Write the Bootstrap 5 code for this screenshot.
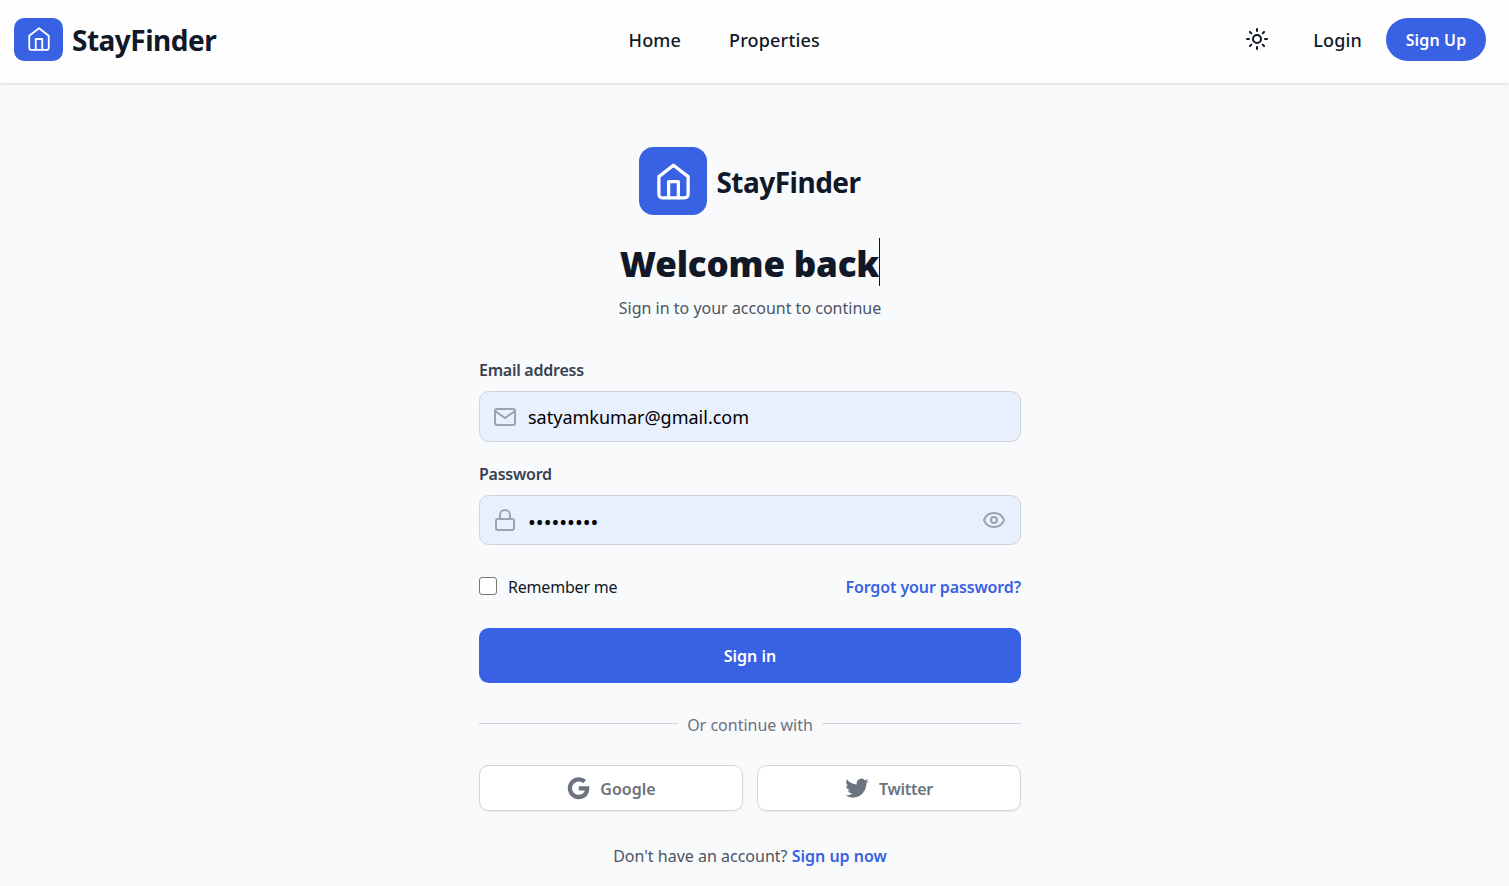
<!DOCTYPE html>
<html lang="en">
<head>
<meta charset="utf-8">
<meta name="viewport" content="width=device-width, initial-scale=1">
<title>StayFinder – Sign in</title>
<link href="https://cdn.jsdelivr.net/npm/bootstrap@5.3.0/dist/css/bootstrap.min.css" rel="stylesheet">
<script src="https://cdn.jsdelivr.net/npm/bootstrap@5.3.0/dist/js/bootstrap.bundle.min.js" defer></script>
<style>
:root{--brand:#3861e3;--ink:#111827}
body{font-family:"Noto Sans",sans-serif;font-size:16px;line-height:24px;color:var(--ink);background:#f9fafc}
svg{flex:none;display:block}
.stroke-icon{fill:none;stroke:currentColor;stroke-width:2;stroke-linecap:round;stroke-linejoin:round}
.stroke-thin{stroke-width:1.7}
.site-header{height:83px;padding:0 23px 4px 14px;background:#fefefe;box-shadow:0 1px 3px rgba(0,0,0,.1),0 1px 2px rgba(0,0,0,.04)}
.brand-name{font-size:28px;font-weight:700;letter-spacing:-.5px;line-height:36px;color:var(--ink);margin-left:9px}
.logo-tile{background:var(--brand);color:#fff}
.logo-sm{width:49px;height:43px;border-radius:10px;padding-bottom:1px}
.logo-lg{width:68px;height:68px;border-radius:14.5px}
.top-nav{gap:48px}
.top-link{font-size:18px;font-weight:500;color:var(--ink);text-decoration:none;letter-spacing:.17px}
.theme-btn{width:50px;height:44px;color:var(--ink);padding:0 0 2px}
.login-link{margin:0 24px 0 31px}
.signup-pill{width:100px;height:43px;font-weight:600;letter-spacing:.15px}
.btn-brand,.btn-brand:hover{background:var(--brand);color:#fff;border:0}
.auth-main{padding:64px 9px 0 0}
.auth-col{width:542px}
.auth-title{font-size:35px;font-weight:900;line-height:44px;padding-top:4px;letter-spacing:-.2px;margin:23px 0 10px;border-right:1px solid var(--ink)}
.form-label{font-weight:600;color:#374151;margin:0 0 9px;letter-spacing:-.25px}
.field-box{height:51px;padding:0 14px 0 13px;background:#e8effd;border:1px solid #d1d5db;border-radius:9.7px;color:#9ca3af}
.field-box.pw{height:50px}
.field-input{border:0;background:none;outline:0;font-size:18px;color:#000;padding:0;margin-left:11px}
.pw .field-input{font-size:20.8px;padding-top:3px}
.remember-box{width:18px;height:18px;margin:-2px 0 0;border:1px solid #767676;border-radius:3px!important}
.brand-link{color:var(--brand);text-decoration:none;font-weight:600}
.signin-btn{height:55px;border-radius:9.7px;font-weight:600}
.rule{height:1px;background:#d1d5db;margin-top:-4px}
.social-row{gap:14px;margin-top:28px}
.social-btn,.social-btn:hover{height:46px;background:#fff;border:1px solid #d1d5db;border-radius:9.7px;color:#6b7280;font-weight:600;box-shadow:0 1px 2px rgba(0,0,0,.05)}
.social-btn .btn-text{margin-left:10px;padding-top:2px}
.icon-slot{width:24px;height:24px}
</style>
</head>
<body>
<svg class="d-none" xmlns="http://www.w3.org/2000/svg">
  <symbol id="house" viewBox="0 0 24 24"><path d="M3 9l9-7 9 7v11a2 2 0 0 1-2 2H5a2 2 0 0 1-2-2z"/><path d="M9 22V12h6v10"/></symbol>
</svg>
<header class="site-header d-flex align-items-center justify-content-between">
  <a class="d-flex align-items-center text-decoration-none" href="#">
    <span class="logo-tile logo-sm d-flex align-items-center justify-content-center"><svg class="stroke-icon stroke-thin" width="26" height="26"><use href="#house"/></svg></span>
    <span class="brand-name">StayFinder</span>
  </a>
  <nav class="top-nav d-flex">
    <a class="top-link" href="#">Home</a>
    <a class="top-link" href="#">Properties</a>
  </nav>
  <div class="d-flex align-items-center">
    <button class="btn theme-btn border-0 d-flex align-items-center justify-content-center" aria-label="Toggle theme">
      <svg class="stroke-icon" width="24" height="24" viewBox="0 0 24 24"><circle cx="12" cy="12" r="4"/><path d="M12 2v2M12 20v2M4.93 4.93l1.41 1.41M17.66 17.66l1.41 1.41M2 12h2M20 12h2M6.34 17.66l-1.41 1.41M19.07 4.93l-1.41 1.41"/></svg>
    </button>
    <a class="top-link login-link" href="#">Login</a>
    <a class="btn btn-brand signup-pill rounded-pill p-0 d-flex align-items-center justify-content-center" href="#">Sign Up</a>
  </div>
</header>
<main class="auth-main d-flex justify-content-center">
  <div class="auth-col d-flex flex-column">
    <div class="d-flex align-items-center justify-content-center">
      <span class="logo-tile logo-lg d-flex align-items-center justify-content-center"><svg class="stroke-icon" width="39" height="39"><use href="#house"/></svg></span>
      <span class="brand-name" style="padding-top:2px">StayFinder</span>
    </div>
    <h1 class="auth-title align-self-center">Welcome back</h1>
    <p class="text-center m-0" style="color:#4b5563">Sign in to your account to continue</p>
    <form class="d-flex flex-column" style="margin-top:38px">
      <label class="form-label" for="email">Email address</label>
      <div class="field-box d-flex align-items-center">
        <svg class="stroke-icon" width="24" height="24" viewBox="0 0 24 24"><rect x="2" y="4" width="20" height="16" rx="2"/><path d="M22 6l-10 7L2 6"/></svg>
        <input class="field-input flex-grow-1" id="email" type="email" value="satyamkumar@gmail.com">
      </div>
      <label class="form-label" for="password" style="margin-top:20px">Password</label>
      <div class="field-box pw d-flex align-items-center">
        <svg class="stroke-icon" width="24" height="24" viewBox="0 0 24 24"><rect x="3" y="11" width="18" height="11" rx="2"/><path d="M7 11V7a5 5 0 0 1 10 0v4"/></svg>
        <input class="field-input flex-grow-1" id="password" type="password" value="satyam123">
        <svg class="stroke-icon" width="24" height="24" viewBox="0 0 24 24"><path d="M2.062 12.348a1 1 0 0 1 0-.696 10.75 10.75 0 0 1 19.876 0 1 1 0 0 1 0 .696 10.75 10.75 0 0 1-19.876 0"/><circle cx="12" cy="12" r="3"/></svg>
      </div>
      <div class="d-flex align-items-center justify-content-between" style="margin-top:30px">
        <div class="d-flex align-items-center">
          <input class="form-check-input remember-box" type="checkbox" id="remember">
          <label for="remember" style="margin-left:11px;letter-spacing:-.2px">Remember me</label>
        </div>
        <a class="brand-link" href="#" style="letter-spacing:-.12px">Forgot your password?</a>
      </div>
      <button type="button" class="btn btn-brand signin-btn p-0" style="margin-top:29px">Sign in</button>
    </form>
    <div class="d-flex align-items-center" style="margin-top:30px">
      <span class="rule flex-grow-1"></span>
      <span style="margin:0 9px;color:#6b7280">Or continue with</span>
      <span class="rule flex-grow-1"></span>
    </div>
    <div class="social-row d-flex">
      <button class="btn social-btn p-0 w-50 d-flex align-items-center justify-content-center">
        <span class="icon-slot d-flex align-items-center justify-content-center"><svg width="26.4" height="26.4" viewBox="0 0 24 24" fill="currentColor"><path d="M12.545 10.239v3.821h5.445c-.712 2.315-2.647 3.972-5.445 3.972a6.033 6.033 0 1 1 0-12.064c1.498 0 2.866.549 3.921 1.453l2.814-2.814A9.969 9.969 0 0 0 12.545 2C7.021 2 2.543 6.477 2.543 12s4.478 10 10.002 10c8.396 0 10.249-7.85 9.426-11.748z"/></svg></span>
        <span class="btn-text">Google</span>
      </button>
      <button class="btn social-btn p-0 w-50 d-flex align-items-center justify-content-center">
        <span class="icon-slot d-flex align-items-center justify-content-center"><svg width="28" height="28" viewBox="0 0 24 24" fill="currentColor"><path d="M8.29 20.251c7.547 0 11.675-6.253 11.675-11.675 0-.178 0-.355-.012-.53A8.348 8.348 0 0022 5.92a8.19 8.19 0 01-2.357.646 4.118 4.118 0 001.804-2.27 8.224 8.224 0 01-2.605.996 4.107 4.107 0 00-6.993 3.743 11.65 11.65 0 01-8.457-4.287 4.106 4.106 0 001.27 5.477A4.072 4.072 0 012.8 9.713v.052a4.105 4.105 0 003.292 4.022 4.095 4.095 0 01-1.853.07 4.108 4.108 0 003.834 2.85A8.233 8.233 0 012 18.407a11.616 11.616 0 006.29 1.84"/></svg></span>
        <span class="btn-text" style="letter-spacing:-.3px">Twitter</span>
      </button>
    </div>
    <p class="text-center mb-0" style="margin-top:33px;color:#4b5563">Don't have an account? <a class="brand-link" href="#">Sign up now</a></p>
  </div>
</main>
</body>
</html>
